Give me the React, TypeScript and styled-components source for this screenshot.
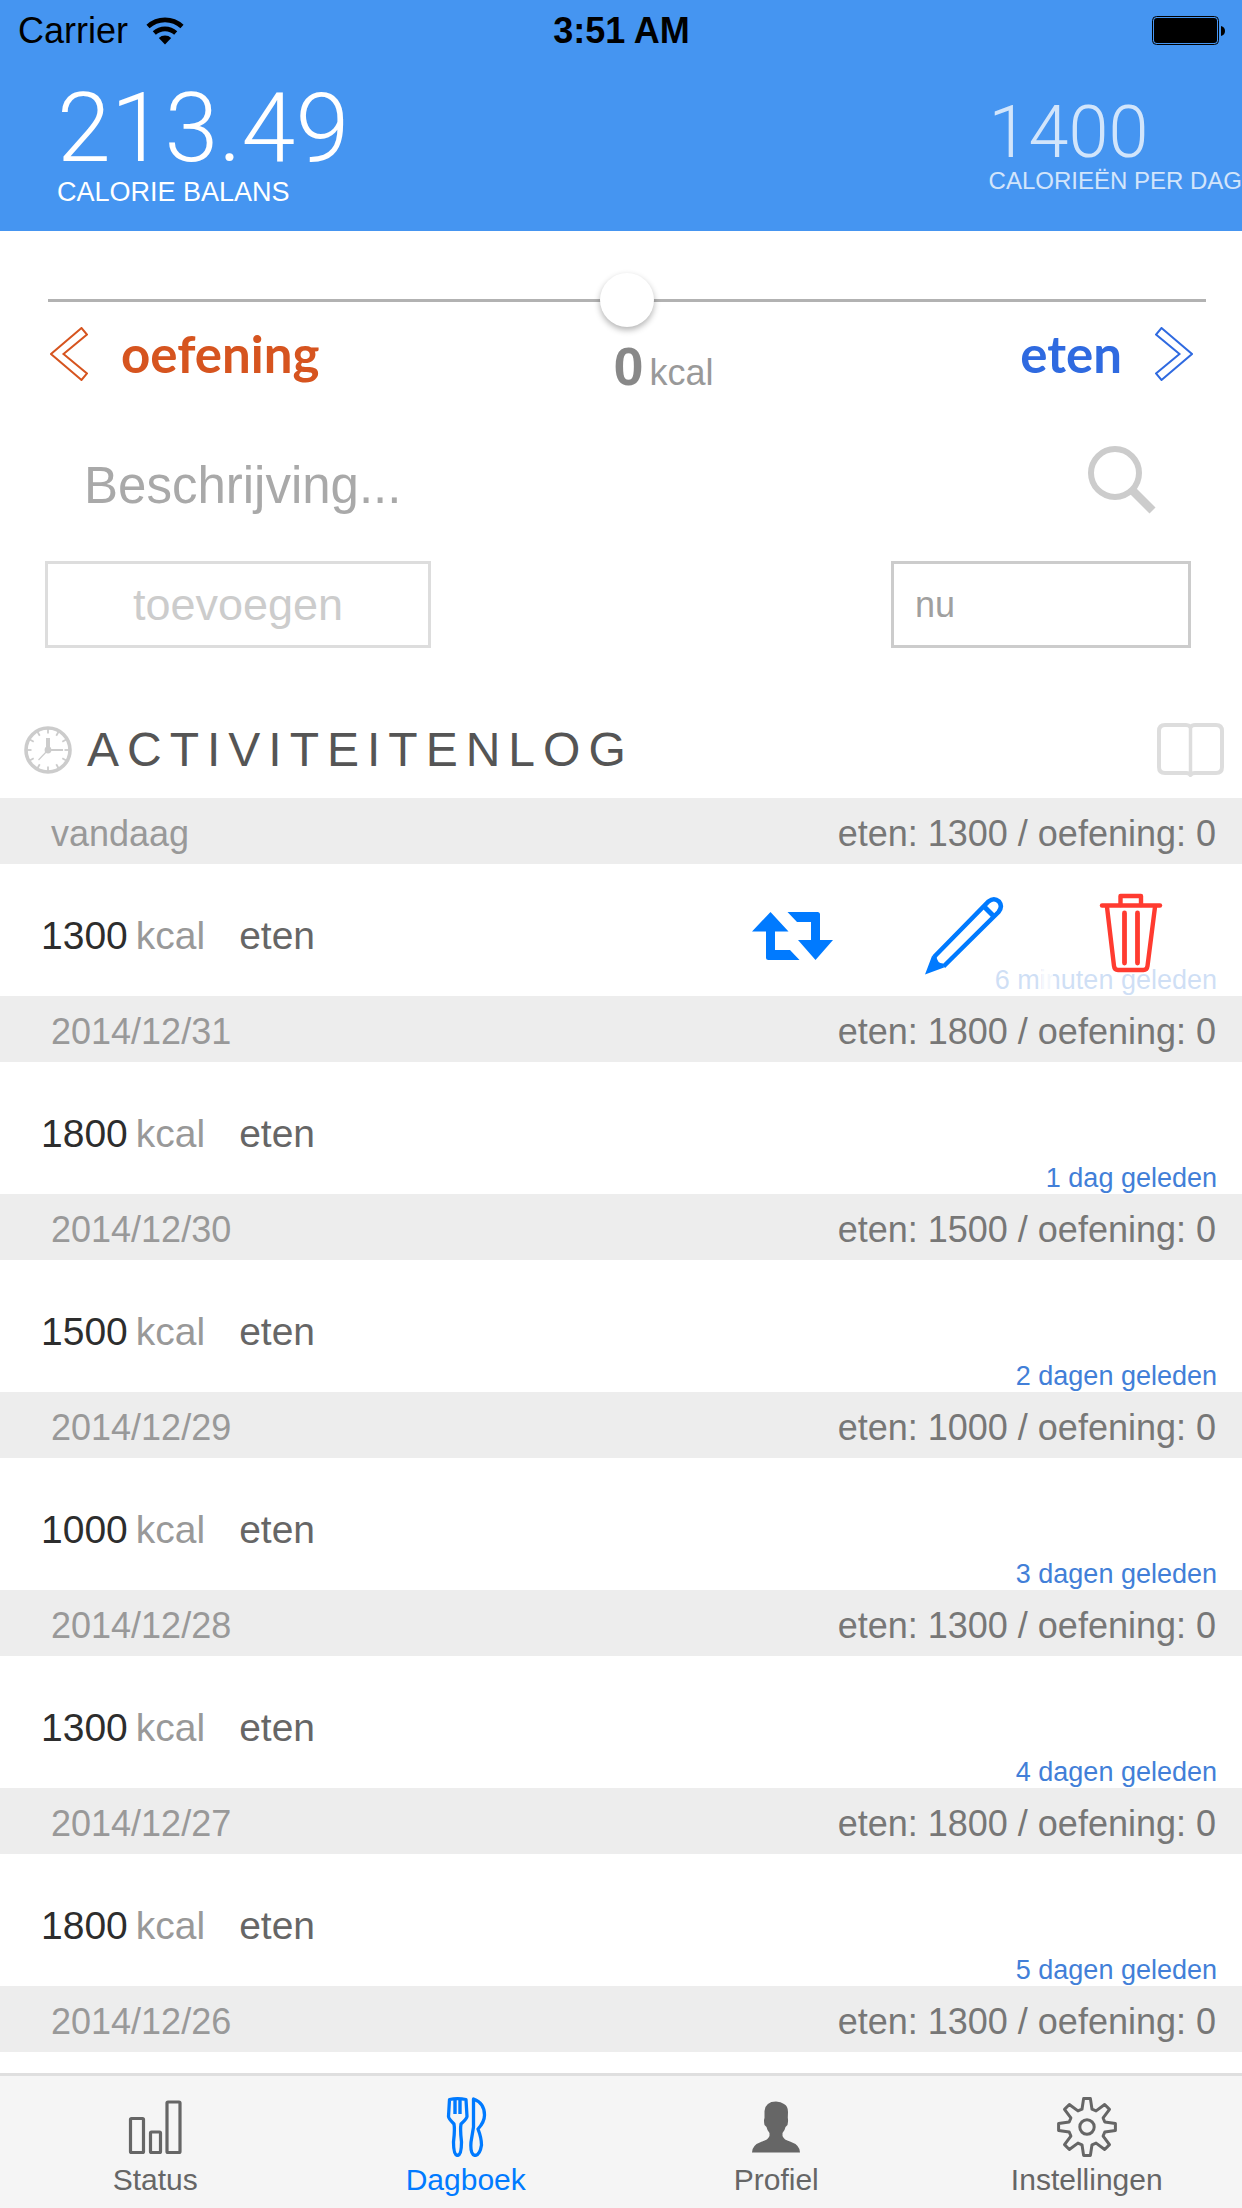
import React, { useState } from "react";
import styled, { createGlobalStyle } from "styled-components";

const sans = '"Liberation Sans", Arial, Helvetica, sans-serif';

const GlobalStyle = createGlobalStyle`
  *, *::before, *::after { box-sizing: border-box; }
  html, body { margin: 0; padding: 0; background: #fff; }
  body { font-family: ${sans}; color: #333; }
  button, input { font-family: inherit; }
  button { margin: 0; padding: 0; border: 0; background: none; cursor: pointer; }
  svg { display: block; flex: none; }
`;

const Screen = styled.div`
  display: flex;
  flex-direction: column;
  height: 100vh;
  overflow: hidden;
`;

const Header = styled.header`
  flex: none;
  background: #4595f1;
  color: #fff;
  padding-bottom: 24px;
`;

const StatusBar = styled.div`
  display: grid;
  grid-template-columns: 1fr auto 1fr;
  align-items: center;
  height: 60px;
  padding: 2px 17px 0 18px;
  color: #000;
  font-size: 36px;
  line-height: 42px;
`;

const Carrier = styled.div`
  display: flex;
  align-items: center;
  gap: 18px;
`;

const Clock = styled.time`
  font-weight: 700;
`;

const BatterySlot = styled.div`
  justify-self: end;
`;

const Totals = styled.div`
  display: flex;
  justify-content: space-between;
  align-items: flex-start;
  padding: 19px 0 0 57px;
`;

const Total = styled.div<{ $minor?: boolean }>`
  padding-top: ${(p) => (p.$minor ? "21px" : "0")};
  opacity: ${(p) => (p.$minor ? 0.76 : 1)};
`;

const Amount = styled.div<{ $minor?: boolean }>`
  font-family: Roboto, ${sans};
  font-weight: 300;
  font-size: ${(p) => (p.$minor ? "72px" : "97px")};
  line-height: ${(p) => (p.$minor ? "66px" : "98px")};
`;

const Caption = styled.div<{ $minor?: boolean }>`
  font-size: ${(p) => (p.$minor ? "24px" : "27px")};
  line-height: 30px;
  white-space: nowrap;
`;

const Form = styled.form`
  flex: none;
  padding: 42px 36px 0 45px;
`;

const Slider = styled.input`
  appearance: none;
  display: block;
  width: calc(100% - 3px);
  height: 54px;
  margin: 0 0 0 3px;
  background: linear-gradient(#b2b2b2, #b2b2b2) center / 100% 3px no-repeat;
  &::-webkit-slider-thumb {
    appearance: none;
    width: 54px;
    height: 54px;
    border-radius: 50%;
    background: #fff;
    box-shadow: 0 3px 6px rgba(0, 0, 0, 0.3);
  }
`;

const Scale = styled.div`
  display: grid;
  grid-template-columns: 1fr auto 1fr;
  align-items: start;
  padding: 0 13px 0 5px;
  height: 102px;
`;

const Direction = styled.button<{ $tone: string; $end?: boolean }>`
  display: flex;
  align-items: center;
  justify-self: ${(p) => (p.$end ? "end" : "start")};
  gap: 33px;
  height: 54px;
  color: ${(p) => p.$tone};
  font-family: Lato, ${sans};
  font-weight: 700;
  font-size: 51px;
  line-height: 54px;
`;

const Reading = styled.output`
  display: flex;
  align-items: baseline;
  gap: 6px;
  padding: 9px 0 0 84px;
  color: #888;
  font-size: 54px;
  line-height: 60px;
  font-weight: 700;
`;

const Unit = styled.span`
  color: #999;
  font-weight: 400;
  font-size: 36px;
`;

const SearchRow = styled.label`
  display: flex;
  align-items: flex-start;
  height: 114px;
  padding: 17px 50px 0 39px;
`;

const Description = styled.input`
  flex: 1;
  min-width: 0;
  height: 78px;
  padding: 0;
  border: 0;
  outline: 0;
  background: none;
  color: #555;
  font-size: 51px;
  &::placeholder { color: #a9a9a9; opacity: 1; }
`;

const SubmitRow = styled.div`
  display: flex;
  justify-content: space-between;
  padding: 18px 15px 0 0;
`;

const AddButton = styled.button`
  width: 386px;
  height: 87px;
  border: 3px solid #ddd;
  color: #ccc;
  font-size: 45px;
  line-height: 54px;
`;

const WhenInput = styled.input`
  width: 300px;
  height: 87px;
  padding: 0 21px;
  border: 3px solid #ccc;
  border-radius: 0;
  outline: 0;
  background: none;
  color: #a0a0a0;
  font-size: 36px;
`;

const LogHeader = styled.div`
  flex: none;
  display: flex;
  align-items: center;
  justify-content: space-between;
  margin-top: 54px;
  height: 96px;
  padding: 0 18px 0 24px;
`;

const LogTitle = styled.h1`
  display: flex;
  align-items: center;
  gap: 15px;
  margin: 0;
  color: #555;
  font-size: 48px;
  line-height: 54px;
  font-weight: 400;
  letter-spacing: 8px;
`;

const Log = styled.main`
  flex: 1;
  min-height: 0;
  overflow: hidden;
`;

const DayBar = styled.h2`
  display: flex;
  align-items: center;
  justify-content: space-between;
  height: 66px;
  margin: 0;
  padding: 6px 26px 0 51px;
  background: #ededed;
  color: #999;
  font-size: 36px;
  line-height: 42px;
  font-weight: 400;
`;

const DaySum = styled.span`
  color: #777;
`;

const Entry = styled.div`
  position: relative;
  display: flex;
  flex-direction: column;
  justify-content: flex-end;
  height: 132px;
  padding: 0 25px 0 41px;
`;

const EntryLine = styled.div`
  display: flex;
  align-items: baseline;
  color: #666;
  font-size: 39px;
  line-height: 45px;
`;

const Kcal = styled.span`
  color: #2d2d2d;
`;

const KcalUnit = styled.span`
  margin: 0 34px 0 8px;
  color: #999;
`;

const Ago = styled.time`
  align-self: flex-end;
  color: #427fd8;
  font-size: 27px;
  line-height: 32px;
  margin-top: 6px;
`;

const Actions = styled.div`
  position: absolute;
  inset: 0 22px 0 auto;
  display: flex;
`;

const Action = styled.button<{ $tone: string }>`
  display: flex;
  align-items: center;
  justify-content: center;
  width: 178px;
  margin-left: -11px;
  padding-top: 12px;
  background: rgba(255, 255, 255, 0.75);
  color: ${(p) => p.$tone};
`;

const TabBar = styled.nav`
  flex: none;
  display: grid;
  grid-template-columns: repeat(4, 1fr);
  height: 135px;
  border-top: 3px solid #dfdfdf;
  background: #f5f5f5;
`;

const Tab = styled.a<{ $active?: boolean }>`
  display: flex;
  flex-direction: column;
  align-items: center;
  gap: 5px;
  padding-top: 21px;
  color: ${(p) => (p.$active ? "#007aff" : "#666")};
  font-size: 30px;
  line-height: 36px;
  text-decoration: none;
`;

const WifiIcon = () => (
  <svg width="38" height="28" viewBox="0 0 38 28" fill="none" stroke="currentColor" aria-hidden="true">
    <path d="M2 9.500A25 25 0 0 1 36 9.500" strokeWidth="4.600" />
    <path d="M8.300 16A16 16 0 0 1 29.700 16" strokeWidth="4.600" />
    <path d="M19 27.500L12.800 21A9 9 0 0 1 25.200 21Z" fill="currentColor" stroke="none" />
  </svg>
);

const BatteryIcon = () => (
  <svg width="73" height="30" viewBox="0 0 73 30" aria-hidden="true">
    <rect x="0.5" y="0.5" width="66" height="28" rx="4" fill="none" stroke="#000" />
    <rect x="2" y="2" width="63" height="25" rx="3" />
    <path d="M69 10q4 1 4 5t-4 5z" />
  </svg>
);

const Chevron = ({ flip }: { flip?: boolean }) => (
  <svg width="38" height="54" viewBox="0 0 38 54" fill="none" stroke="currentColor" strokeWidth="2" aria-hidden="true">
    <path
      transform={flip ? "matrix(-1 0 0 1 38 0)" : undefined}
      d="M31.500 1L1 27L31.500 53L37 46.500L13.500 27L37 7.500Z"
    />
  </svg>
);

const SearchIcon = () => (
  <svg width="68" height="68" viewBox="0 0 68 68" fill="none" stroke="#ccc" aria-hidden="true">
    <circle cx="27" cy="27" r="24" strokeWidth="6" />
    <path d="M44 44L64.500 64.500" strokeWidth="8.500" />
  </svg>
);

const ClockIcon = () => (
  <svg width="48" height="48" viewBox="0 0 48 48" fill="none" stroke="#ccc" aria-hidden="true">
    <circle cx="24" cy="24" r="22" strokeWidth="3.600" />
    {Array.from({ length: 12 }, (_, i) => (
      <path key={i} d="M24 3V7.500" strokeWidth="1.800" transform={`rotate(${i * 30} 24 24)`} />
    ))}
    <path d="M24 24V12" strokeWidth="4" />
    <path d="M24 24H39" strokeWidth="2" />
    <path d="M24 24L14.500 34" strokeWidth="1.200" />
    <circle cx="24" cy="24" r="3.400" fill="#ccc" stroke="none" />
  </svg>
);

const BookIcon = () => (
  <svg width="67" height="54" viewBox="0 0 67 54" fill="none" stroke="#ddd" strokeWidth="4" strokeLinejoin="round" aria-hidden="true">
    <path d="M33.500 4Q32 2 29 2H8Q2 2 2 8V44Q2 50 8 50H29Q32.500 50 33.500 52Q34.500 50 38 50H59Q65 50 65 44V8Q65 2 59 2H38Q35 2 33.500 4Z" />
    <path d="M33.500 4V52" strokeWidth="3.500" />
  </svg>
);

const RepeatIcon = () => (
  <svg width="90" height="50" viewBox="0 0 90 50" fill="currentColor" aria-hidden="true">
    <path d="M0 20.500L18.500 1L36.500 20.500H23V39H38L47.500 49H16.500Q14 49 14 46.500V20.500Z" />
    <path d="M35.500 1H65.500Q68 1 68 3.500V29H81L63.500 49L46 29H59V11H45Z" />
  </svg>
);

const PencilIcon = () => (
  <svg width="80" height="80" viewBox="0 0 80 80" fill="none" stroke="currentColor" strokeWidth="4.500" aria-hidden="true">
    <path d="M10 61L64.500 5.500Q70 1 75 5.500Q79 10.500 74.500 16L19.500 70.500" />
    <path d="M60.500 11L69 19.500" strokeWidth="5" />
    <path d="M1 78.500L8 60L12.500 60.500Q13 67 19 67.500L20 71.500Z" fill="currentColor" stroke="none" />
  </svg>
);

const TrashIcon = () => (
  <svg width="64" height="86" viewBox="0 0 64 86" fill="none" stroke="currentColor" strokeWidth="4.400" strokeLinecap="round" strokeLinejoin="round" aria-hidden="true">
    <path d="M3 12.500H61" />
    <path d="M21.500 12V3H42V12" />
    <path d="M8 14L15 73Q15.500 77 19 77H44.500Q48 77 48.500 73L56 14" />
    <path d="M25.500 20V70M38.500 20V70" strokeWidth="4.800" />
  </svg>
);

const StatusIcon = () => (
  <svg width="60" height="60" viewBox="0 0 60 60" fill="none" stroke="currentColor" strokeWidth="3.200" aria-hidden="true">
    <rect x="5.500" y="21.500" width="13" height="34" rx="1" />
    <rect x="25.500" y="35" width="10" height="20.500" rx="1" />
    <rect x="42" y="5" width="13" height="50.500" rx="1" />
  </svg>
);

const DiaryIcon = () => (
  <svg width="60" height="60" viewBox="0 0 60 60" fill="none" stroke="currentColor" strokeWidth="3.300" strokeLinejoin="round" aria-hidden="true">
    <path d="M13.500 2.500Q21.500 .8 30 2.500L31 19.500Q31 21.500 25 27Q24 33 25.500 45Q25.500 58 21.500 58.500Q17.500 58 17.500 45Q19 33 18 27Q12.500 21.500 12.500 19.500Z" />
    <path d="M19 2V17M24 2V17" strokeWidth="3.400" />
    <path d="M37.500 2Q48.500 6 48.500 18Q48.500 25 42 32Q45.500 41 45.500 48Q44 58 39 58.500Q34 57.500 35 45L37.500 30Z" />
  </svg>
);

const ProfileIcon = () => (
  <svg width="60" height="60" viewBox="0 0 60 60" fill="currentColor" aria-hidden="true">
    <path d="M30 4.500Q35 4.500 38 7Q42 9 42 15L41.800 21Q42.500 23 41.500 28L39.500 30Q39 33 36.500 36V39Q38 43 44 44.500Q54 48 54 55.500H6Q6 48 16 44.500Q22 43 23.500 39V36Q21 33 20.500 30L18.500 28Q17.500 23 18.500 21V14Q19.500 4.500 30 4.500Z" />
  </svg>
);

// One tooth of the gear, turned eight times round the centre.
const tooth = [
  [-5, -17.8],
  [-3.4, -28.4],
  [3.4, -28.4],
  [5, -17.8],
];
const gearPoints = Array.from({ length: 8 }, (_, i) => {
  const a = (i * Math.PI) / 4;
  return tooth
    .map(([x, y]) => `${(30 + x * Math.cos(a) - y * Math.sin(a)).toFixed(2)},${(30 + x * Math.sin(a) + y * Math.cos(a)).toFixed(2)}`)
    .join(" ");
}).join(" ");

const GearIcon = () => (
  <svg width="60" height="60" viewBox="0 0 60 60" fill="none" stroke="currentColor" strokeWidth="3" strokeLinejoin="round" aria-hidden="true">
    <polygon points={gearPoints} />
    <circle cx="30" cy="30" r="7.200" />
  </svg>
);

const days = [
  { label: "vandaag", kcal: 1300, ago: "6 minuten geleden", open: true },
  { label: "2014/12/31", kcal: 1800, ago: "1 dag geleden" },
  { label: "2014/12/30", kcal: 1500, ago: "2 dagen geleden" },
  { label: "2014/12/29", kcal: 1000, ago: "3 dagen geleden" },
  { label: "2014/12/28", kcal: 1300, ago: "4 dagen geleden" },
  { label: "2014/12/27", kcal: 1800, ago: "5 dagen geleden" },
  { label: "2014/12/26", kcal: 1300 },
];

const tabs = [
  { label: "Status", Icon: StatusIcon },
  { label: "Dagboek", Icon: DiaryIcon, active: true },
  { label: "Profiel", Icon: ProfileIcon },
  { label: "Instellingen", Icon: GearIcon },
];

export default function App() {
  const [kcal, setKcal] = useState(0);
  return (
    <Screen>
      <GlobalStyle />
      <Header>
        <StatusBar>
          <Carrier>
            Carrier
            <WifiIcon />
          </Carrier>
          <Clock>3:51 AM</Clock>
          <BatterySlot>
            <BatteryIcon />
          </BatterySlot>
        </StatusBar>
        <Totals>
          <Total>
            <Amount>213.49</Amount>
            <Caption>CALORIE BALANS</Caption>
          </Total>
          <Total $minor>
            <Amount $minor>1400</Amount>
            <Caption $minor>CALORIEËN PER DAG</Caption>
          </Total>
        </Totals>
      </Header>

      <Form onSubmit={(e) => e.preventDefault()}>
        <Slider
          type="range"
          min={-1000}
          max={1000}
          value={kcal}
          aria-label="kcal"
          onChange={(e) => setKcal(Number(e.target.value))}
        />
        <Scale>
          <Direction type="button" $tone="#d6541f" onClick={() => setKcal(kcal - 10)}>
            <Chevron />
            oefening
          </Direction>
          <Reading>
            {Math.abs(kcal)}
            <Unit>kcal</Unit>
          </Reading>
          <Direction type="button" $tone="#2f6ae0" $end onClick={() => setKcal(kcal + 10)}>
            eten
            <Chevron flip />
          </Direction>
        </Scale>
        <SearchRow>
          <Description type="text" placeholder="Beschrijving..." aria-label="Beschrijving" />
          <SearchIcon />
        </SearchRow>
        <SubmitRow>
          <AddButton type="submit">toevoegen</AddButton>
          <WhenInput type="text" defaultValue="nu" aria-label="nu" />
        </SubmitRow>
      </Form>

      <LogHeader>
        <LogTitle>
          <ClockIcon />
          ACTIVITEITENLOG
        </LogTitle>
        <button type="button" aria-label="Dagboek">
          <BookIcon />
        </button>
      </LogHeader>

      <Log>
        {days.map((day) => (
          <section key={day.label}>
            <DayBar>
              {day.label}
              <DaySum>eten: {day.kcal} / oefening: 0</DaySum>
            </DayBar>
            {day.ago && (
              <Entry>
                <EntryLine>
                  <Kcal>{day.kcal}</Kcal>
                  <KcalUnit>kcal</KcalUnit>
                  eten
                </EntryLine>
                <Ago>{day.ago}</Ago>
                {day.open && (
                  <Actions>
                    <Action type="button" $tone="#007aff" aria-label="Herhalen">
                      <RepeatIcon />
                    </Action>
                    <Action type="button" $tone="#007aff" aria-label="Bewerken">
                      <PencilIcon />
                    </Action>
                    <Action type="button" $tone="#ff3b30" aria-label="Verwijderen">
                      <TrashIcon />
                    </Action>
                  </Actions>
                )}
              </Entry>
            )}
          </section>
        ))}
      </Log>

      <TabBar>
        {tabs.map(({ label, Icon, active }) => (
          <Tab key={label} href="#" $active={active} aria-current={active ? "page" : undefined}>
            <Icon />
            {label}
          </Tab>
        ))}
      </TabBar>
    </Screen>
  );
}
